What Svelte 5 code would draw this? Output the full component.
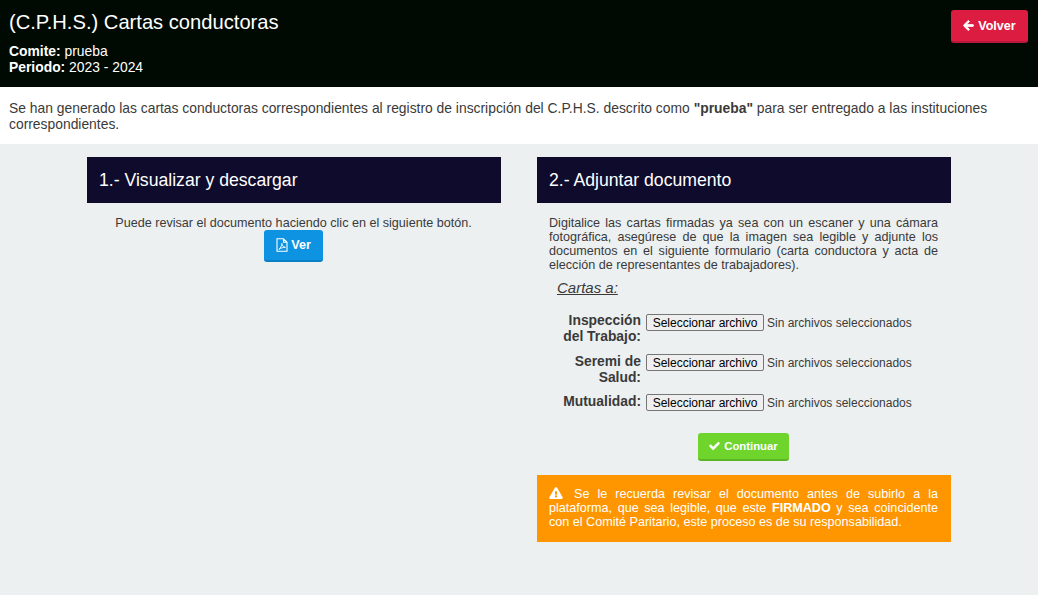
<script>
  const rows = [
    { label: 'Inspección del Trabajo:' },
    { label: 'Seremi de Salud:' },
    { label: 'Mutualidad:' }
  ];
</script>

<div class="page">
  <header class="top">
    <div class="info">
      <h1>(C.P.H.S.) Cartas conductoras</h1>
      <p><b>Comite:</b> prueba<br /><b>Periodo:</b> 2023 - 2024</p>
    </div>
    <button class="btn red">
      <svg class="ic" viewBox="-20 20 488 472" width="11" height="11"><path fill="currentColor" stroke="currentColor" stroke-width="36" d="M257.500 445.100l-22.200 22.200c-9.400 9.400-24.600 9.400-33.900 0L7 273c-9.400-9.400-9.400-24.600 0-33.900L201.400 44.700c9.400-9.400 24.600-9.400 33.900 0l22.200 22.200c9.500 9.500 9.300 25-.4 34.300L136.600 216H424c13.300 0 24 10.700 24 24v32c0 13.300-10.700 24-24 24H136.600l120.500 114.800c9.800 9.300 10 24.800.4 34.300z"/></svg>
      Volver
    </button>
  </header>

  <section class="intro">
    Se han generado las cartas conductoras correspondientes al registro de inscripción del C.P.H.S. descrito como <b>"prueba"</b> para ser entregado a las instituciones correspondientes.
  </section>

  <main class="cols">
    <section>
      <h2>1.- Visualizar y descargar</h2>
      <div class="left">
        <p>Puede revisar el documento haciendo clic en el siguiente botón.</p>
        <button class="btn blue">
          <svg class="ic" viewBox="0 0 12 14" width="12" height="14"><path fill="none" stroke="currentColor" stroke-width="1.1" d="M1 .8h6.500L11 4.300v8.900H1zM7.500.8v3.500H11"/><path fill="none" stroke="currentColor" stroke-width=".9" d="M2.800 11.400c1.600-1 3-3.600 3-6 .2 2.200 1.200 3.600 3.600 3.900-2.200 0-4.400.7-6.600 2.100z"/></svg>
          Ver
        </button>
      </div>
    </section>

    <section>
      <h2>2.- Adjuntar documento</h2>
      <p class="desc">Digitalice las cartas firmadas ya sea con un escaner y una cámara fotográfica, asegúrese de que la imagen sea legible y adjunte los documentos en el siguiente formulario (carta conductora y acta de elección de representantes de trabajadores).</p>
      <h3>Cartas a:</h3>
      <div class="form">
        {#each rows as r}
          <div class="row">
            <div class="label">{r.label}</div>
            <div class="file">
              <button class="pick" type="button">Seleccionar archivo</button>
              <span>Sin archivos seleccionados</span>
            </div>
          </div>
        {/each}
      </div>
      <div class="center">
        <button class="btn green">
          <svg class="ic" viewBox="-20 20 552 472" width="11" height="10"><path fill="currentColor" stroke="currentColor" stroke-width="36" d="M174 439L7 273c-10-10-10-26 0-36l36-36c10-10 26-10 36 0l113 112L433 72c10-10 26-10 36 0l36 36c10 10 10 26 0 36L210 439c-10 10-26 10-36 0z"/></svg>
          Continuar
        </button>
      </div>
      <div class="warn">
        <svg class="ic" viewBox="0 0 576 512" width="14" height="12"><path fill="currentColor" d="M570 440c18 32-5 72-42 72H48c-37 0-60-40-42-72L246 24c19-32 65-32 84 0zM288 354c-25 0-46 21-46 46s21 46 46 46 46-21 46-46-21-46-46-46zm-44-166l7 136c0 6 6 11 12 11h50c6 0 12-5 12-11l7-136c0-7-5-12-12-12h-64c-7 0-12 5-12 12z"/></svg>
        Se le recuerda revisar el documento antes de subirlo a la plataforma, que sea legible, que este <b>FIRMADO</b> y sea coincidente con el Comité Paritario, este proceso es de su responsabilidad.
      </div>
    </section>
  </main>
</div>

<style>
  :global(body) {
    margin: 0;
    background: #ecf0f1;
    font-family: "Liberation Sans", Arial, sans-serif;
    color: #3a3a3a;
  }
  .page {
    min-height: 595px;
    background: #ecf0f1;
    font-size: 13.860px;
    line-height: 1.2;
  }
  .top {
    height: 87px;
    box-sizing: border-box;
    background: #000a02;
    color: #fff;
    display: flex;
    justify-content: space-between;
    padding: 10px 10px 0 9px;
  }
  h1 {
    margin: 0;
    font-size: 20.160px;
    font-weight: 400;
    line-height: 24px;
  }
  .info p {
    margin: 9px 0 0;
    line-height: 16px;
  }
  .btn {
    display: inline-flex;
    align-items: center;
    justify-content: center;
    gap: 4px;
    border: 0;
    border-radius: 3px;
    color: #fff;
    font: bold 12.600px "Liberation Sans", Arial, sans-serif;
    cursor: pointer;
    padding: 0;
  }
  .red {
    width: 77px;
    height: 33px;
    background: #dc1d41;
    border-bottom: 2px solid #b9183a;
  }
  .blue {
    width: 59px;
    height: 32px;
    margin-right: 1px;
    gap: 3px;
    background: #0e93e2;
    border-bottom: 2px solid #0b7fc4;
  }
  .green {
    width: 91px;
    height: 28px;
    margin-right: 1px;
    font-size: 11.340px;
    background: #6fd52d;
    border-bottom: 2px solid #5cb524;
  }
  .ic { flex: none; }
  .intro {
    height: 57px;
    box-sizing: border-box;
    background: #fff;
    padding: 13px 9px 0;
    line-height: 16px;
  }
  .cols {
    display: grid;
    grid-template-columns: 414px 414px;
    gap: 36px;
    justify-content: center;
    padding-top: 13px;
  }
  h2 {
    margin: 0;
    height: 46px;
    box-sizing: border-box;
    padding: 2px 12px 0;
    display: flex;
    align-items: center;
    background: #0f0b2c;
    color: #fff;
    font-size: 17.640px;
    font-weight: 400;
  }
  .left {
    text-align: center;
    font-size: 12.600px;
    padding-top: 13px;
  }
  .left p {
    margin: 0;
    padding-right: 1px;
    line-height: 14px;
  }
  .desc {
    margin: 0;
    padding: 13px 13px 0 12px;
    font-size: 12.600px;
    line-height: 14px;
    text-align: justify;
  }
  h3 {
    margin: 0;
    padding: 7px 0 0 20px;
    font-size: 15px;
    line-height: 18px;
    font-weight: 400;
    font-style: italic;
    text-decoration: underline;
  }
  .form {
    padding-top: 15px;
  }
  .row {
    display: flex;
    gap: 5px;
    margin-bottom: 8px;
  }
  .row:nth-child(3) {
    margin-bottom: 0;
  }
  .row:nth-child(2) .label {
    padding-top: 1px;
  }
  .row:nth-child(3) .file {
    margin-top: 1px;
  }
  .label {
    width: 104px;
    box-sizing: border-box;
    padding-left: 14px;
    text-align: right;
    font-weight: 700;
    font-size: 13.860px;
    line-height: 16px;
  }
  .file {
    display: flex;
    align-items: center;
    height: 17px;
    margin-top: 2px;
    gap: 3px;
    font-size: 12px;
  }
  .file span {
    position: relative;
    top: 1px;
  }
  .pick {
    width: 118px;
    height: 17px;
    padding: 0;
    box-sizing: border-box;
    background: #efefef;
    border: 1px solid #767676;
    border-radius: 2px;
    color: #000;
    font: 12px "Liberation Sans", Arial, sans-serif;
    white-space: nowrap;
  }
  .center {
    text-align: center;
    padding-top: 22px;
  }
  .warn {
    margin-top: 14px;
    background: #ff9600;
    color: #fff;
    padding: 11px 13px 13px 12px;
    font-size: 12.600px;
    line-height: 14px;
    text-align: justify;
  }
  .warn .ic {
    margin-right: 3px;
    position: relative;
    top: 1px;
  }
</style>
